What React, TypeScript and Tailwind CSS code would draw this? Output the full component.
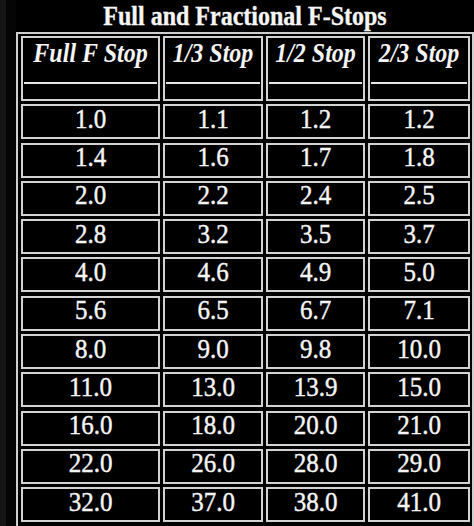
import React from "react";

const headers = ["Full F Stop", "1/3 Stop", "1/2 Stop", "2/3 Stop"];
const rows: string[][] = [
  ["1.0", "1.1", "1.2", "1.2"],
  ["1.4", "1.6", "1.7", "1.8"],
  ["2.0", "2.2", "2.4", "2.5"],
  ["2.8", "3.2", "3.5", "3.7"],
  ["4.0", "4.6", "4.9", "5.0"],
  ["5.6", "6.5", "6.7", "7.1"],
  ["8.0", "9.0", "9.8", "10.0"],
  ["11.0", "13.0", "13.9", "15.0"],
  ["16.0", "18.0", "20.0", "21.0"],
  ["22.0", "26.0", "28.0", "29.0"],
  ["32.0", "37.0", "38.0", "41.0"],
];

export default function App() {
  return (
    <div
      className="w-[474px] h-[526px] bg-black overflow-hidden flex text-[#f5f5f5]"
      style={{ fontFamily: '"Liberation Serif", "Times New Roman", serif' }}
    >
      <div className="w-[6px] shrink-0 bg-[#151515]" />
      <div className="w-[10px] shrink-0 bg-[#050505]" />
      <div className="flex-1 flex flex-col">
        <div className="h-[32px] shrink-0 pt-[4px] flex justify-center">
          <span className="inline-block text-[24px] leading-[24px] font-bold scale-y-[1.12] [-webkit-text-stroke:0.3px_#f5f5f5]">
            Full and Fractional F-Stops
          </span>
        </div>
        <div className="border-2 border-[#cfcfcf] pt-[2px] pl-[3px] pr-[2px] pb-[40px]">
          <div className="grid grid-cols-[139px_100px_99px_102px] grid-rows-[65px_repeat(11,35px)] gap-x-[3px] gap-y-[3.3px]">
            {headers.map((h) => (
              <div
                key={h}
                className="border-2 border-[#d2d2d2] flex flex-col items-stretch pt-[3px]"
              >
                <div className="flex justify-center">
                  <span className="inline-block text-[24px] leading-[24px] font-bold italic scale-y-[1.12]">
                    {h}
                  </span>
                </div>
                <div className="mt-[17px] mx-[1px] h-[2px] bg-[#e6e6e6]" />
              </div>
            ))}
            {rows.map((r, i) =>
              r.map((v, j) => (
                <div
                  key={`${i}-${j}`}
                  className="border-2 border-[#d2d2d2] flex items-center justify-center pb-[6px]"
                >
                  <span className="inline-block text-[25px] leading-[24px] scale-y-[1.1] [-webkit-text-stroke:0.4px_#f5f5f5]">
                    {v}
                  </span>
                </div>
              ))
            )}
          </div>
        </div>
      </div>
    </div>
  );
}
